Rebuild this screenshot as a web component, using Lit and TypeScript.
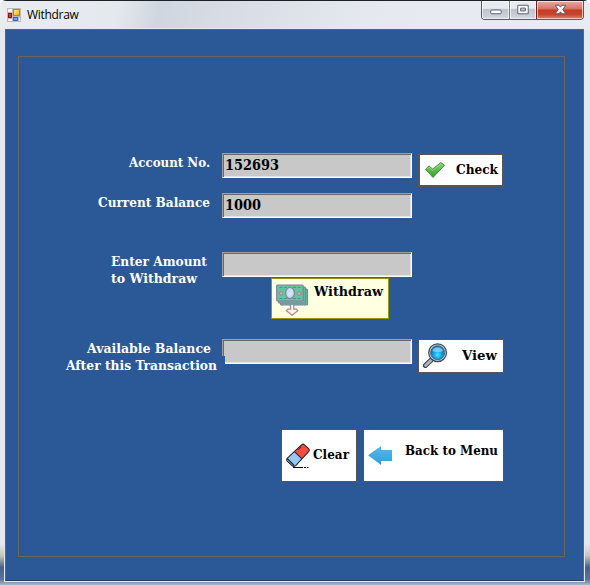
import { LitElement, html, css } from "lit";
import { customElement } from "lit/decorators.js";

const line = (text: string, width: number, cls = "") => html`
  <svg class="line ${cls}" width=${width} height="17" viewBox="0 0 ${width} 17">
    <text x="0" y="13" textLength=${width} lengthAdjust="spacingAndGlyphs">${text}</text>
  </svg>`;

const appIcon = html`<svg class="app-icon" width="14" height="14" viewBox="0 0 14 14">
  <defs><linearGradient id="y" x2="1" y2="1"><stop stop-color="#fff3a0"/><stop offset="1" stop-color="#e9a800"/></linearGradient></defs>
  <path d="M0 0h14v14H0z" fill="#b9bbbf"/>
  <path d="M1 1h4v3H1zM1 11h4v2H1zM12 10h1v3h-1z" fill="#f4f5f7"/>
  <rect x="6.5" y="1.5" width="6" height="6" fill="url(#y)" stroke="#b98708"/>
  <rect x="1.5" y="5.5" width="3" height="4" fill="#d63a2b" stroke="#a20d0d"/>
  <rect x="6.5" y="9.5" width="4" height="3" fill="#6ea4ef" stroke="#3568c9"/>
</svg>`;

const checkIcon = html`<svg class="icon-check" width="20" height="16" viewBox="0 0 20 16">
  <defs><linearGradient id="g" x2="0" y2="1"><stop stop-color="#8fd673"/><stop offset="1" stop-color="#2f9a2e"/></linearGradient></defs>
  <path d="M.5 7.3 4 3.9 7.6 7 15.8.5l3.7 2.7L8 15.5z" fill="url(#g)" stroke="#3b9136" stroke-width=".9" stroke-linejoin="round"/>
  <path d="M2.2 7.2 4 5.3l3.7 3.2 8.2-6.6" fill="none" stroke="#a8e28c" stroke-width=".6"/>
</svg>`;

const cashIcon = html`<svg class="icon-cash" width="33" height="32" viewBox="0 0 33 32">
  <g stroke="#8c7ba6" stroke-width="1.2">
    <rect x="4.5" y="5" width="27" height="16" rx="1" fill="#5dbd9b"/>
    <rect x="2.5" y="3" width="27" height="16" rx="1" fill="#5dbd9b"/>
    <rect x=".7" y="1" width="26.5" height="16" rx="1" fill="#62c5a0"/>
    <path d="M3.5 3.5h21M3.5 14.5h21" fill="none" stroke="#438f80" stroke-dasharray="3 1.5" stroke-width=".8"/>
    <ellipse cx="14" cy="9" rx="4.4" ry="5.5" fill="#c6ddf5"/>
    <circle cx="5.2" cy="9.5" r="1.7" fill="#efac68" stroke-width=".8"/>
    <circle cx="23.2" cy="9.5" r="1.7" fill="#efac68" stroke-width=".8"/>
    <path d="M14.5 21v4.2h-2.6L10.5 26.7l5.6 4.6 5.6-4.6-1.4-1.5h-2.6V21" fill="#fff5df" stroke="#a884ab"/>
  </g>
  <path d="m11.8 10.7 4.2-4.2M13 12.2l3.7-3.7" stroke="#edf5ff"/>
</svg>`;

const lensIcon = html`<svg class="icon-lens" width="25" height="25" viewBox="0 0 25 25">
  <defs><radialGradient id="b" cy=".65"><stop stop-color="#4ce5ff"/><stop offset=".55" stop-color="#16a5e2"/><stop offset="1" stop-color="#0874bd"/></radialGradient></defs>
  <path d="m8.7 16.5-6.3 6" stroke="#3c424a" stroke-width="5" stroke-linecap="round"/>
  <path d="m8.5 16.7-6 5.7" stroke="#b0b7c0" stroke-width="2.8" stroke-linecap="round"/>
  <circle cx="14.6" cy="9.7" r="8.9" fill="#c8d0d9" stroke="#3d4854" stroke-width="1.2"/>
  <circle cx="14.6" cy="9.7" r="7" fill="url(#b)" stroke="#356286" stroke-width=".8"/>
  <path d="M9.2 8.1a5.8 5.8 0 0 1 10.9 0q-5.5 2-10.9 0z" fill="#9edcf8" opacity=".75"/>
</svg>`;

const eraserIcon = html`<svg class="icon-eraser" width="25" height="26" viewBox="0 0 25 26">
  <path d="M8.5 8.7 15.5 1.8q1.4-1.4 3 0l4.1 3.8q1.4 1.5 0 3L16 15.8z" fill="#fb4b3d"/>
  <path d="m8.5 8.7 7.5 7.1-6.3 6.9q-2 1.7-3.6 0l-4.9-4.5q-1.2-1.5.2-3z" fill="#9bc8f3"/>
  <path d="M15.5 1.8q1.4-1.4 3 0l4.1 3.8q1.4 1.5 0 3L9.7 22.7q-2 1.7-3.6 0l-4.9-4.5q-1.2-1.5.2-3zM8.5 8.7l7.5 7.1M1.2 15.5l7 7" fill="none" stroke="#222a35" stroke-width="1.1"/>
  <path d="m12.3 6.8 3-3" stroke="#40252a"/>
  <path d="M7 24.5h10m1 0h2m1 0h1.5" stroke="#111"/>
</svg>`;

const arrowIcon = html`<svg class="icon-arrow" width="24" height="19" viewBox="0 0 24 19">
  <defs><linearGradient id="a" x2="0" y2="1"><stop stop-color="#55b9ea"/><stop offset="1" stop-color="#329fdc"/></linearGradient></defs>
  <path d="M0 9.3 13 0v4h11v11H13v4z" fill="url(#a)"/>
</svg>`;

@customElement("app-root")
export class AppRoot extends LitElement {
  static styles = css`
    * { box-sizing: border-box; }
    :host {
      box-sizing: border-box;
      display: flex; flex-direction: column; width: 590px; height: 585px; padding: 0 6px 4px 5px; overflow: hidden;
      background:
        linear-gradient(#1d2029, #1d2029) 0 0 / 100% 1px no-repeat,
        linear-gradient(100deg, #e9edf2, #e4e9ee 20%, #d0d6df 27%, #dbe0e8 45%, #e6eaf0 65%, #e8ecf2) 0 0 / 100% 30px no-repeat,
        linear-gradient(#e3e8ef 0, #e3e8ef 93%, #c3c7b5 95%, #48618b 97%, #5d7296 99%, #a9b9cf 100%);
      border-radius: 6px 6px 0 0;
    }
    .line { display: block; overflow: visible; flex: none; }
    .line text { font: bold 13px "DejaVu Serif Condensed", "DejaVu Serif", serif; font-stretch: condensed; fill: #000; }
    .line.light text { fill: #fff; }
    .title { display: flex; height: 29px; flex: none; padding: 8px 0 0 2px; }
    .app-icon { flex: none; }
    .name { font: 12px/14px "Open Sans", sans-serif; margin-left: 6px; letter-spacing: -.3px; color: #000; white-space: nowrap; }
    .controls { display: flex; margin: -7px 0 0 auto; width: 103px; height: 19px; border: 1px solid #555c6c; border-top: 0; border-radius: 0 0 4px 4px; overflow: hidden; }
    .ctl { flex: 0 0 28px; border-right: 1px solid #777e8d; box-shadow: inset 0 0 0 1px #ffffff99; background: linear-gradient(#e7eaef 0 40%, #bdc3ce 48%, #d3d7df); }
    .ctl.max { flex-basis: 27px; }
    .ctl.close { flex: 1; border: 0; border-left: 1px solid #741f19; margin-left: -1px; background: linear-gradient(#e9aaa0 0, #d77566 43%, #c63c24 50%, #c5452d 75%, #e08765); }
    .ctl svg { display: block; width: 100%; height: 100%; }
    .client { flex: 1; min-height: 0; background: #2b5896; border: 1px solid #5d656c; border-bottom-color: #263f63; padding: 26px 18px 23px 12px; box-shadow: 0 0 0 1px #e3e8ee; }
    .panel { height: 501px; border: 1px solid #6b655e; padding-top: 96px; }
    .row { display: flex; align-items: flex-start; height: 34px; }
    .label { flex: none; width: 203px; padding-top: 1px; }
    .account { padding-left: 110px; }
    .current { padding-left: 79px; }
    .enter { padding-left: 92px; }
    .available { padding-left: 47px; }
    .available .line:first-child { margin-left: 21px; }
    .field { width: 190px; height: 25px; flex: none; background: #c8c8c8; border: 1px solid; border-color: #a0a0a0 #fff #fff #a0a0a0; box-shadow: inset 1px 1px #696969, inset -1px -1px #e3e3e3; padding: 3px 0 0 2px; }
    .field .line text { font-size: 14px; }
    .chipped { clip-path: polygon(0 0, 100% 0, 100% 100%, 3px 100%, 3px 17px, 0 17px); }
    .button { display: flex; align-items: flex-start; flex: none; background: #fff; border: 1px solid #555; }
    .side { width: 86px; height: 34px; margin-left: 6px; }
    .check { border-width: 2px; }
    .balance { margin-top: 6px; height: 25px; }
    .amount { margin-top: 34px; height: 25px; }
    .withdraw { margin: 1px 0 0 252px; width: 118px; height: 41px; background: #ffffe1; border-color: #999900; }
    .after { margin-top: 20px; }
    .actions { display: flex; gap: 6px; margin: 56px 0 0 262px; }
    .clear { width: 76px; height: 53px; }
    .back { width: 141px; height: 53px; }
    .icon-check { margin: 7px 0 0 5px; } .check .line { margin: 6px 0 0 11px; }
    .icon-cash { margin: 5px 0 0 4px; } .withdraw .line { margin: 4px 0 0 5px; }
    .icon-lens { margin: 3px 0 0 4px; } .view .line { margin: 7px 0 0 14px; }
    .icon-eraser { margin: 13px 0 0 4px; } .clear .line { margin: 16px 0 0 2px; }
    .icon-arrow { margin: 16px 0 0 4px; } .back .line { margin: 12px 0 0 13px; }
  `;

  render() {
    return html`
      <header class="title">
        ${appIcon}<span class="name">Withdraw</span>
        <div class="controls">
          <div class="ctl"><svg viewBox="0 0 27 19"><rect x="8.5" y="9.5" width="11" height="4" rx="1" fill="#fff" stroke="#555b6d"/></svg></div>
          <div class="ctl max"><svg viewBox="0 0 26 19"><path d="M7.5 4.5h11v9h-11zM10.5 7.5v3h5v-3z" fill="#fff" fill-rule="evenodd" stroke="#555b6d"/></svg></div>
          <div class="ctl close"><svg viewBox="0 0 47 19"><path d="M18.5 4.5h4l1.5 2 1.5-2h4L26.5 9l3 4.5h-4L24 11.4l-1.5 2.1h-4l3-4.5z" fill="#fff" stroke="#59526a"/></svg></div>
        </div>
      </header>
      <main class="client"><div class="panel">
        <div class="row">
          <div class="label account">${line("Account No.", 81, "light")}</div>
          <div class="field">${line("152693", 54)}</div>
          <div class="button side check">${checkIcon}${line("Check", 42)}</div>
        </div>
        <div class="row balance">
          <div class="label current">${line("Current Balance", 112, "light")}</div>
          <div class="field">${line("1000", 36)}</div>
        </div>
        <div class="row amount">
          <div class="label enter">${line("Enter Amount", 96, "light")}${line("to Withdraw", 86, "light")}</div>
          <div class="field"></div>
        </div>
        <div class="button withdraw">${cashIcon}${line("Withdraw", 69)}</div>
        <div class="row after">
          <div class="label available">${line("Available Balance", 124, "light")}${line("After this Transaction", 151, "light")}</div>
          <div class="field chipped"></div>
          <div class="button side view">${lensIcon}${line("View", 35)}</div>
        </div>
        <div class="actions">
          <div class="button clear">${eraserIcon}${line("Clear", 36)}</div>
          <div class="button back">${arrowIcon}${line("Back to Menu", 93)}</div>
        </div>
      </div></main>`;
  }
}
